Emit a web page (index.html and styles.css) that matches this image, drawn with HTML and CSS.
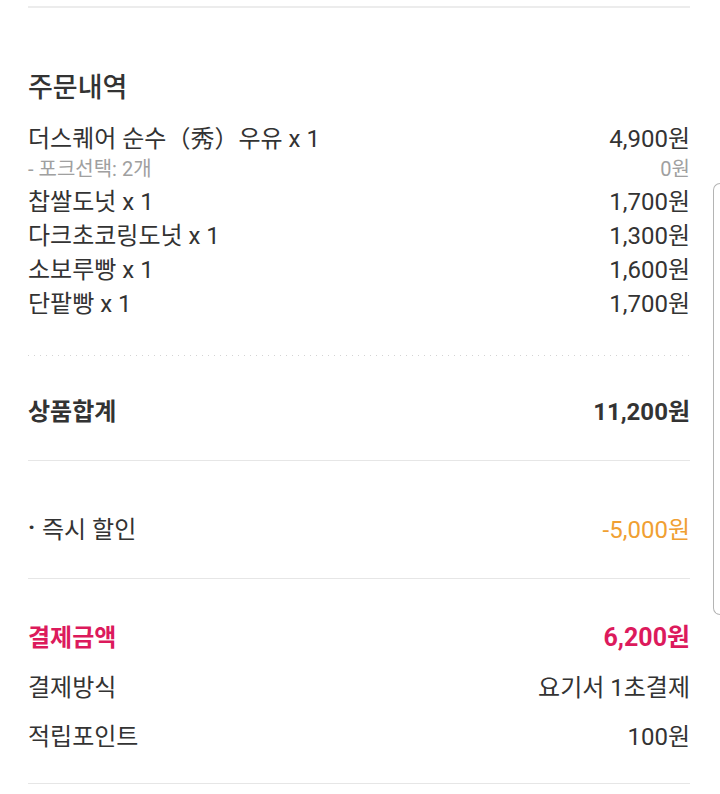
FILE: index.html
```html
<!DOCTYPE html>
<html lang="ko">
<head>
<meta charset="utf-8">
<title>주문내역</title>
<link rel="stylesheet" href="styles.css">
</head>
<body>
<div class="page">
  <div class="rule rule-top"></div>

  <h2 class="heading">주문내역</h2>

  <div class="items">
    <div class="row item"><span>더스퀘어 순수（秀）우유 x 1</span><span>4,900원</span></div>
    <div class="row sub"><span>- 포크선택: 2개</span><span>0원</span></div>
    <div class="row item"><span>찹쌀도넛 x 1</span><span>1,700원</span></div>
    <div class="row item"><span>다크초코링도넛 x 1</span><span>1,300원</span></div>
    <div class="row item"><span>소보루빵 x 1</span><span>1,600원</span></div>
    <div class="row item"><span>단팥빵 x 1</span><span>1,700원</span></div>
  </div>

  <div class="dots"></div>

  <div class="row total"><span>상품합계</span><span>11,200원</span></div>

  <div class="rule rule-total"></div>

  <div class="row discount"><span class="bullet-label"><span class="bullet">·</span>즉시 할인</span><span class="orange">-5,000원</span></div>

  <div class="rule rule-discount"></div>

  <div class="pay">
    <div class="row pay-amount"><span>결제금액</span><span>6,200원</span></div>
    <div class="row pay-info"><span>결제방식</span><span>요기서 1초결제</span></div>
    <div class="row pay-info last"><span>적립포인트</span><span>100원</span></div>
  </div>

  <div class="rule rule-bottom"></div>
</div>
<div class="edge-handle"></div>
</body>
</html>
```

FILE: styles.css
```css
* { box-sizing: border-box; }

html, body {
  margin: 0;
  padding: 0;
  background: #ffffff;
}

body {
  font-family: Roboto, "Noto Sans CJK KR", "Noto Sans", sans-serif;
  color: #333333;
  width: 720px;
  height: 794px;
  overflow: hidden;
  position: relative;
}

.page {
  padding: 0 30px 0 28px;
}

.rule {
  height: 2px;
  background: #ececec;
}

.rule-top { margin-top: 6px; }

.heading {
  margin: 63px 0 14px;
  font-size: 27px;
  line-height: 34px;
  font-weight: 500;
  color: #333;
}

.row {
  display: flex;
  justify-content: space-between;
  align-items: center;
}

.item {
  height: 34px;
  font-size: 24px;
}

.sub {
  height: 29px;
  font-size: 20px;
  color: #a0a0a0;
}

.dots {
  margin-top: 37px;
  height: 1px;
  background-image: repeating-linear-gradient(to right, #d4d4d4 0 1px, transparent 1px 6px);
}

.total {
  margin-top: 36px;
  height: 34px;
  font-size: 24px;
  font-weight: 700;
}

.rule-total { margin-top: 34px; height: 1px; background: #e6e6e6; }

.discount {
  margin-top: 49px;
  height: 34px;
  font-size: 24px;
}

.bullet-label {
  display: flex;
  align-items: center;
}

.bullet {
  display: inline-block;
  width: 14px;
  font-weight: 700;
}

.orange { color: #f0a032; }

.rule-discount { margin-top: 34px; height: 1px; background: #e6e6e6; }

.pay { padding-top: 31px; }

.pay-amount {
  height: 50px;
  font-size: 24px;
  font-weight: 700;
  color: #dc1a5c;
}

.pay-amount span:last-child { font-size: 25px; }

.pay-info {
  height: 50px;
  font-size: 24px;
}

.pay-info.last { height: 48px; }

.rule-bottom { margin-top: 25px; height: 1px; background: #e6e6e6; }

.edge-handle {
  position: absolute;
  left: 713px;
  top: 183px;
  width: 12px;
  height: 432px;
  border: 1px solid #b4b4b4;
  border-right: none;
  border-radius: 7px 0 0 7px;
  background: #ffffff;
}
```
